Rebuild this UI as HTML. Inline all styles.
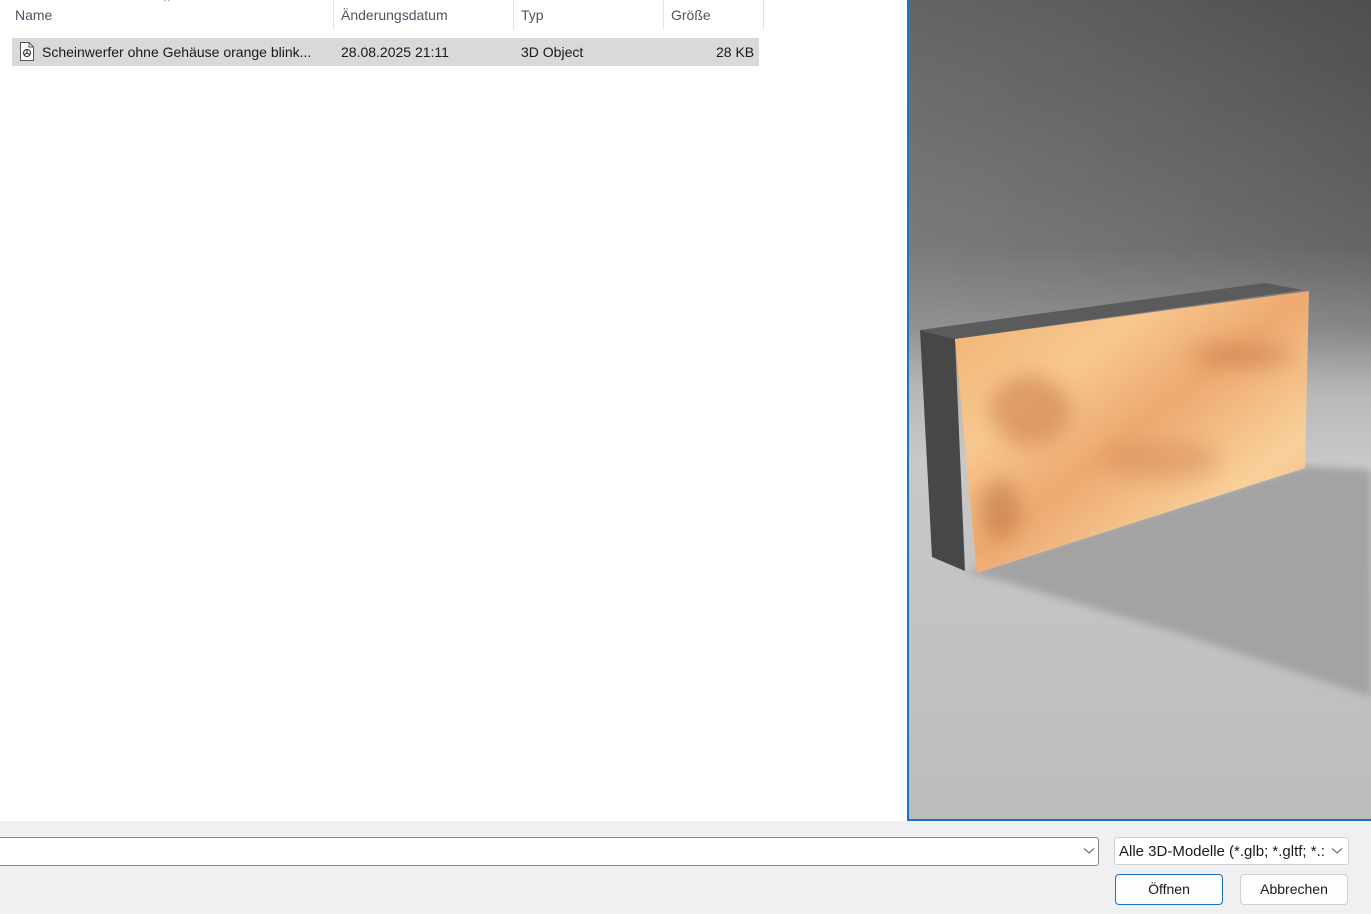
<!DOCTYPE html>
<html><head><meta charset="utf-8"><style>
body{margin:0;width:1371px;height:914px;overflow:hidden;background:#fff;font-family:"Liberation Sans",sans-serif;font-size:14px;color:#1a1a1a;position:relative}
.hdr{position:absolute;top:0;height:30px;color:#4c5563;font-size:14px;line-height:30px}
.sep{position:absolute;top:0;width:1px;height:30px;background:#e5e5e5}
.row{position:absolute;left:12px;top:38px;width:747px;height:28px;background:#d9d9d9}
.cell{position:absolute;top:38px;line-height:28px;font-size:14px}
.bottom{position:absolute;left:0;top:821px;width:1371px;height:93px;background:#f0f0f0}
.inp{position:absolute;background:#fff;border:1px solid #8a8a8a;border-radius:3px;box-sizing:border-box}
.btn{position:absolute;background:#fdfdfd;border:1px solid #d0d0d0;border-radius:4px;box-sizing:border-box;text-align:center;line-height:28px;font-size:14px}
</style></head><body>
<div class="hdr" style="left:15px">Name</div>
<div style="position:absolute;left:164px;top:-6px;color:#777;font-size:12px">^</div>
<div class="sep" style="left:333px"></div>
<div class="hdr" style="left:341px">Änderungsdatum</div>
<div class="sep" style="left:513px"></div>
<div class="hdr" style="left:521px">Typ</div>
<div class="sep" style="left:663px"></div>
<div class="hdr" style="left:671px">Größe</div>
<div class="sep" style="left:763px"></div>
<div class="row"></div>
<svg style="position:absolute;left:19px;top:42px" width="16" height="19" viewBox="0 0 16 19"><path d="M1.5 0.5H10L14.5 5V18.5H1.5Z" fill="#fff" stroke="#555"/><path d="M10 .5V5H14.5" fill="none" stroke="#555"/><circle cx="8" cy="11" r="3.5" fill="none" stroke="#333"/><path d="M8 7.5V11L11 12.5M8 11L5 12.5" stroke="#333" fill="none"/></svg>
<div class="cell" style="left:42px">Scheinwerfer ohne Gehäuse orange blink...</div>
<div class="cell" style="left:341px">28.08.2025 21:11</div>
<div class="cell" style="left:521px">3D Object</div>
<div class="cell" style="left:716px">28 KB</div>

<svg style="position:absolute;left:907px;top:0" width="464" height="821" viewBox="907 0 464 821">
<defs>
<linearGradient id="bg2" x1="0" y1="0" x2="0" y2="1">
<stop offset="0" stop-color="#575757"/><stop offset="0.3" stop-color="#707070"/><stop offset="0.4" stop-color="#8e8e8e"/><stop offset="0.47" stop-color="#b6b6b6"/><stop offset="0.56" stop-color="#c8c8c8"/><stop offset="1" stop-color="#bcbcbc"/>
</linearGradient>
<linearGradient id="wallh" x1="0" y1="0" x2="1" y2="0"><stop offset="0" stop-color="#fff" stop-opacity="0.08"/><stop offset="1" stop-color="#000" stop-opacity="0.1"/></linearGradient>
<linearGradient id="fade" x1="0" y1="0" x2="0" y2="1"><stop offset="0" stop-color="#fff"/><stop offset="0.6" stop-color="#fff"/><stop offset="1" stop-color="#000"/></linearGradient>
<mask id="m"><rect x="907" y="0" width="464" height="400" fill="url(#fade)"/></mask>
<linearGradient id="wood" x1="0" y1="0" x2="1" y2="1"><stop offset="0" stop-color="#f0b071"/><stop offset="0.3" stop-color="#f7c88e"/><stop offset="0.5" stop-color="#eda970"/><stop offset="0.75" stop-color="#f9d09a"/><stop offset="1" stop-color="#f0b47a"/></linearGradient>
<filter id="bl"><feGaussianBlur stdDeviation="10"/></filter>
<filter id="bl2"><feGaussianBlur stdDeviation="4"/></filter>
<clipPath id="fr"><polygon points="955,339 1309,291 1305,468 977,573"/></clipPath>
</defs>
<rect x="907" y="0" width="464" height="821" fill="url(#bg2)"/>
<rect x="907" y="0" width="464" height="400" fill="url(#wallh)" mask="url(#m)"/>
<polygon points="965,572 1305,466 1371,470 1371,697 1200,640 1000,580" fill="#a3a3a3" filter="url(#bl2)"/>
<polygon points="920,330 955,339 965,571 932,557" fill="#474747"/>
<polygon points="920,330 1265,283 1303,290 955,339" fill="#5b5b5b"/>
<polygon points="955,339 1309,291 1305,468 977,573" fill="url(#wood)"/>
<g clip-path="url(#fr)" filter="url(#bl)">
<ellipse cx="1030" cy="410" rx="40" ry="35" fill="#c87040" opacity="0.5"/>
<ellipse cx="1240" cy="355" rx="50" ry="12" fill="#c87040" opacity="0.5"/>
<ellipse cx="1000" cy="510" rx="20" ry="30" fill="#b86838" opacity="0.5"/>
<ellipse cx="1160" cy="460" rx="60" ry="20" fill="#d08050" opacity="0.4"/>
</g>
<rect x="907" y="0" width="2" height="821" fill="#1b74c8"/>
<rect x="907" y="819" width="464" height="2" fill="#1b74c8"/>
</svg>

<div class="bottom"></div>
<div class="inp" style="left:-5px;top:837px;width:1104px;height:29px"></div>
<svg style="position:absolute;left:1083px;top:847px" width="12" height="8"><path d="M1 1.5L6 6L11 1.5" fill="none" stroke="#555"/></svg>
<div class="inp" style="left:1114px;top:837px;width:235px;height:28px;border-color:#d0d0d0;font-size:15px;line-height:27px;padding-left:4px;white-space:nowrap;overflow:hidden">Alle 3D-Modelle (*.glb; *.gltf; *.:</div>
<svg style="position:absolute;left:1331px;top:847px" width="12" height="8"><path d="M1 1.5L6 6L11 1.5" fill="none" stroke="#555"/></svg>
<div class="btn" style="left:1115px;top:874px;width:108px;height:31px;border-color:#1a6fbf">Öffnen</div>
<div class="btn" style="left:1240px;top:874px;width:108px;height:31px">Abbrechen</div>
</body></html>
